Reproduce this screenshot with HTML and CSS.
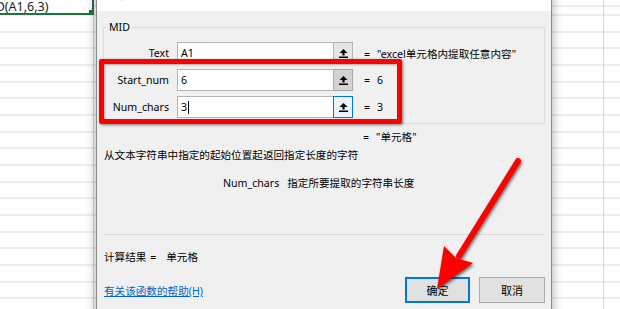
FILE: index.html
```html
<!DOCTYPE html>
<html lang="zh-CN">
<head>
  <meta charset="UTF-8">
  <title>函数参数</title>
  <link rel="stylesheet" href="styles.css">
</head>
<body>

  <div class="cell">=MID(A1,6,3)</div>

  <div class="dialog">
    <div class="titlebar">
      <span class="title">函数参数</span>
      <span class="ctrl">?</span>
      <span class="ctrl">×</span>
    </div>

    <div class="content">
      <fieldset class="group">
        <legend>MID</legend>
        <div class="args">
          <label>Text</label>
          <div class="input">A1</div>
          <button class="pick">
            <svg width="9" height="10" viewBox="0 0 9 10"><path d="M0.5 5 L4.5 1 L8.5 5 Z M3.4 4.5 H5.6 V7.5 H3.4 Z M0 8.6 H9 V10 H0 Z" fill="#000"/></svg>
          </button>
          <div class="res"><span class="eq">=</span>"excel单元格内提取任意内容"</div>

          <label>Start_num</label>
          <div class="input">6</div>
          <button class="pick hover">
            <svg width="9" height="10" viewBox="0 0 9 10"><path d="M0.5 5 L4.5 1 L8.5 5 Z M3.4 4.5 H5.6 V7.5 H3.4 Z M0 8.6 H9 V10 H0 Z" fill="#000"/></svg>
          </button>
          <div class="res"><span class="eq">=</span>6</div>

          <label>Num_chars</label>
          <div class="input">3<span class="caret"></span></div>
          <button class="pick focus">
            <svg width="9" height="10" viewBox="0 0 9 10"><path d="M0.5 5 L4.5 1 L8.5 5 Z M3.4 4.5 H5.6 V7.5 H3.4 Z M0 8.6 H9 V10 H0 Z" fill="#000"/></svg>
          </button>
          <div class="res"><span class="eq">=</span>3</div>
        </div>
      </fieldset>

      <div class="total"><span class="eq">=</span>"单元格"</div>
      <p class="desc">从文本字符串中指定的起始位置起返回指定长度的字符</p>
      <p class="arg-desc"><span class="arg-name">Num_chars</span>指定所要提取的字符串长度</p>

      <hr class="sep">

      <p class="calc">计算结果 <span class="eq">=</span>单元格</p>

      <div class="footer">
        <a class="help" href="#">有关该函数的帮助(H)</a>
        <div class="buttons">
          <button class="btn default">确定</button>
          <button class="btn">取消</button>
        </div>
      </div>
    </div>
  </div>

  <!-- annotation -->
  <div class="mark"></div>
  <svg class="arrow" width="620" height="309" viewBox="0 0 620 309">
    <g fill="#f00" stroke="none">
      <line x1="518" y1="161" x2="459" y2="256" stroke="#f00" stroke-width="6" stroke-linecap="round"/>
      <path d="M437 289 L444 246 L456 258 L473 263 Z"/>
    </g>
  </svg>

</body>
</html>
```

FILE: styles.css
```css
html, body {
  height: 100%;
}

body {
  margin: 0;
  overflow: hidden;
  position: relative;
  font-family: 'Noto Sans', 'Noto Sans CJK SC', sans-serif;
  font-size: 10.6px;
  color: #000;
  background:
    linear-gradient(#d4d4d4, #d4d4d4) 93px 0 / 1px 100% no-repeat,
    linear-gradient(#d4d4d4, #d4d4d4) 603px 0 / 1px 100% no-repeat,
    repeating-linear-gradient(to bottom, #d9d9d9 0 1px, #fff 1px 16.67px) 0 14.5px;
}

/* selected cell in the sheet */
.cell {
  position: relative;
  width: 92px;
  height: 13px;
  border-right: 2px solid #217346;
  border-bottom: 2px solid #217346;
  background: #fff;
  font-size: 12.5px;
  line-height: 14px;
  color: #222;
  white-space: nowrap;
  overflow: hidden;
  text-indent: -27px;
}

.cell::after {
  content: '';
  position: absolute;
  right: -2px;
  bottom: -2px;
  width: 4px;
  height: 4px;
  background: #217346;
  border: 1px solid #fff;
}

.dialog {
  position: absolute;
  left: 96px;
  top: -20px;
  width: 454px;
  height: 340px;
  background: #f0f0f0;
  border: 1px solid #8a8a8a;
  box-shadow: 0 0 10px rgba(0,0,0,0.35);
}

.titlebar {
  height: 22px;
  padding: 0 10px 8px 14px;
  background: #fff;
  display: flex;
  align-items: flex-end;
  font-size: 12px;
  line-height: 16px;
}

.title {
  flex: 1;
}

.ctrl {
  margin-left: 34px;
  font-size: 13px;
}

.content {
  padding: 0 6px;
}

.group {
  margin: 8px 0 0;
  padding: 7px 0 5px;
  border: 1px solid #dcdcdc;
}

.group legend {
  margin-left: 3px;
  padding: 0 2px;
  font-size: 10.6px;
  line-height: 16px;
}

.args {
  display: grid;
  grid-template-columns: 73px 156px 20px 1fr;
  grid-auto-rows: 22px;
  row-gap: 5px;
  align-items: center;
}

.args label {
  text-align: right;
  padding-right: 8px;
}

.input {
  height: 20px;
  line-height: 20px;
  padding: 0 3px;
  background: #fff;
  border: 1px solid #b4b4b4;
  border-right: none;
  display: flex;
  align-items: center;
}

.caret {
  width: 1px;
  height: 13px;
  margin-left: 1px;
  background: #000;
}

.pick {
  width: 20px;
  height: 22px;
  padding: 0;
  margin: 0;
  border: 1px solid #b4b4b4;
  background: #e6e6e6;
  display: flex;
  align-items: center;
  justify-content: center;
}

.pick.hover {
  background: #d2d2d2;
  border-color: #a8a8a8;
}

.pick.focus {
  background: #eaf3fb;
  border-color: #0078d7;
}

.res {
  padding-left: 11px;
  white-space: nowrap;
}

.eq {
  margin-right: 7px;
}

.total {
  margin-top: 5px;
  padding-left: 260px;
  line-height: 16px;
}

.desc {
  margin: 2px 0 0 1px;
  line-height: 16px;
}

.arg-desc {
  margin: 12px 0 0 120px;
  line-height: 16px;
}

.arg-name {
  margin-right: 8px;
}

.sep {
  margin: 43px 0 0 1px;
  border: none;
  border-top: 1px solid #dadada;
}

.calc {
  margin: 14px 0 0 1px;
  line-height: 16px;
}

.calc .eq {
  margin: 0 10px 0 1px;
}

.footer {
  margin-top: 12px;
  padding-left: 1px;
  display: flex;
  align-items: center;
  justify-content: space-between;
}

.help {
  color: #0066cc;
  text-decoration: underline;
  padding-top: 1px;
}

.buttons {
  display: flex;
  gap: 9px;
}

.btn {
  width: 66px;
  height: 26px;
  padding: 0;
  font-family: 'Noto Sans CJK SC', sans-serif;
  font-size: 11px;
  background: #e1e1e1;
  border: 1px solid #adadad;
}

.btn.default {
  width: 65px;
  border: 2px solid #0078d7;
}

/* red highlight box */
.mark {
  position: absolute;
  left: 99px;
  top: 59px;
  width: 293px;
  height: 55px;
  border: 5px solid #f00;
  border-radius: 2px;
  box-shadow: 1px 1px 3px rgba(0,0,0,0.5), inset 1px 1px 2px rgba(0,0,0,0.3);
}

.arrow {
  position: absolute;
  left: 0;
  top: 0;
  filter: drop-shadow(1px 2px 1.5px rgba(0,0,0,0.55));
}
```
